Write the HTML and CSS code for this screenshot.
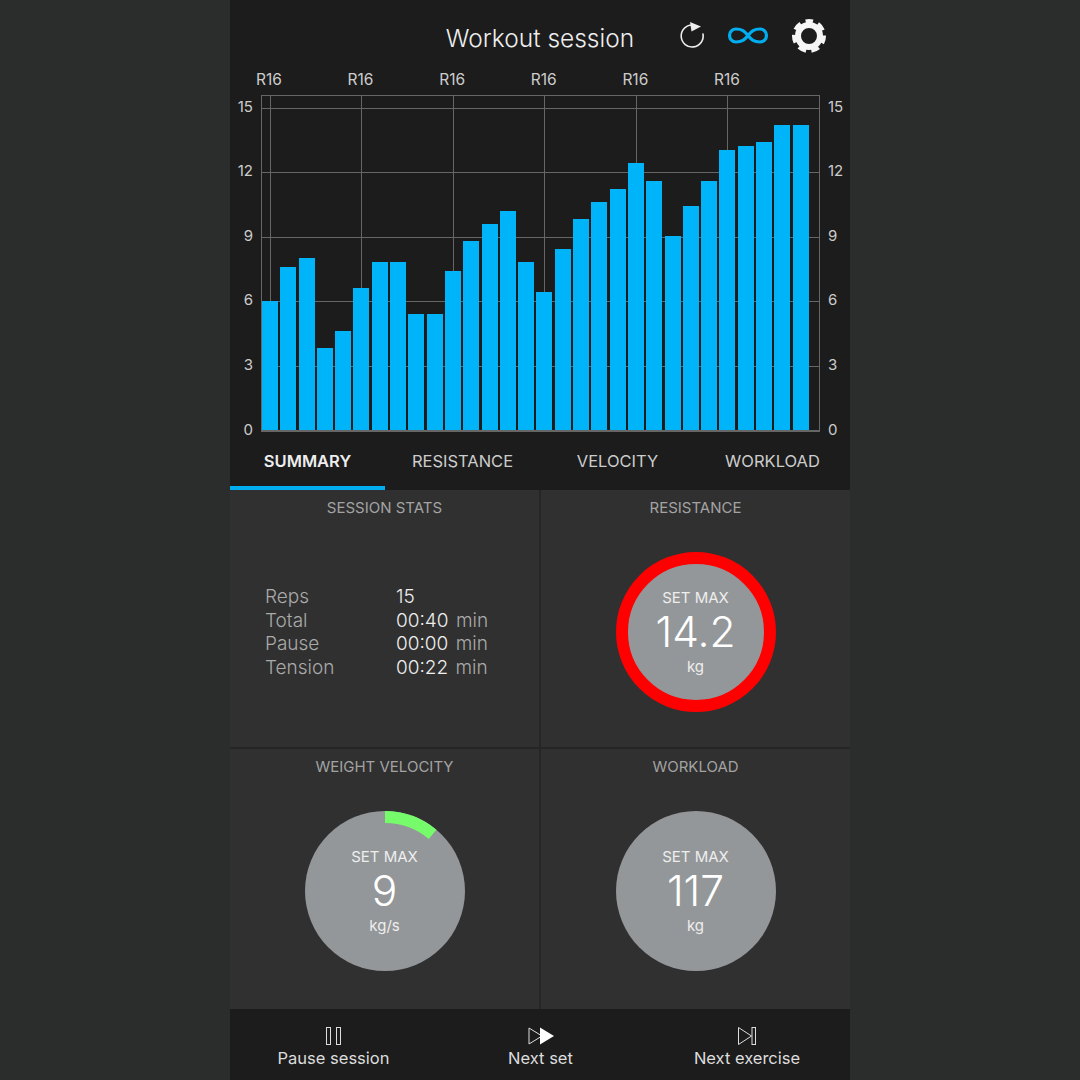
FILE: index.html
```html
<!DOCTYPE html>
<html lang="en">
<head>
  <meta charset="UTF-8">
  <meta name="viewport" content="width=device-width, initial-scale=1.0">
  <title>Workout session</title>
  <link rel="stylesheet" href="styles.css">
</head>
<body>
  <div class="phone">
    <header class="topbar">
      <h1 class="title">Workout session</h1>
      <div class="top-icons">
        <svg class="icon-refresh" width="26" height="28" viewBox="0 0 26 28" fill="none">
          <path d="M12 3A11 11 0 1 0 23 12" stroke="#eee" stroke-width="1.6" stroke-linecap="round"/>
          <path d="M10 0L21 4.500L11.500 9.500Z" fill="#eee"/>
        </svg>
        <svg class="icon-inf" width="42" height="20" viewBox="0 0 42 20" fill="none">
          <path d="M21 9.500C17.500 5 15 3 9 3A6.500 6.500 0 0 0 9 16C15 16 17.500 14 21 9.500C24.500 5 27 3 33 3A6.500 6.500 0 0 1 33 16C27 16 24.500 14 21 9.500Z" stroke="#00aeef" stroke-width="3.200"/>
        </svg>
        <svg class="icon-gear" width="34" height="34" viewBox="0 0 34 34" fill="none" stroke="#f5f5f5">
          <circle cx="17" cy="17" r="11" stroke-width="6"/>
          <circle cx="17" cy="17" r="15" stroke-width="4" stroke-dasharray="8 5.460" stroke-dashoffset="4" transform="rotate(-90 17 17)"/>
        </svg>
      </div>
    </header>

    <section class="chart">
      <div class="chart-top">
        <span>R16</span><span>R16</span><span>R16</span><span>R16</span><span>R16</span><span>R16</span>
      </div>
      <div class="chart-mid">
        <div class="axis axis-left">
          <span>15</span><span>12</span><span>9</span><span>6</span><span>3</span><span>0</span>
        </div>
        <div class="plot">
          <div class="vlines"><i></i><i></i><i></i><i></i><i></i><i></i></div>
          <div class="hlines"><i></i><i></i><i></i><i></i><i></i></div>
          <div class="bars">
            <b style="height:129px"></b><b style="height:163px"></b><b style="height:172px"></b><b style="height:82px"></b><b style="height:99px"></b>
            <b style="height:142px"></b><b style="height:168px"></b><b style="height:168px"></b><b style="height:116px"></b><b style="height:116px"></b>
            <b style="height:159px"></b><b style="height:189px"></b><b style="height:206px"></b><b style="height:219px"></b><b style="height:168px"></b>
            <b style="height:138px"></b><b style="height:181px"></b><b style="height:211px"></b><b style="height:228px"></b><b style="height:241px"></b>
            <b style="height:267px"></b><b style="height:249px"></b><b style="height:194px"></b><b style="height:224px"></b><b style="height:249px"></b>
            <b style="height:280px"></b><b style="height:284px"></b><b style="height:288px"></b><b style="height:305px"></b><b style="height:305px"></b>
          </div>
        </div>
        <div class="axis axis-right">
          <span>15</span><span>12</span><span>9</span><span>6</span><span>3</span><span>0</span>
        </div>
      </div>
    </section>

    <nav class="tabs">
      <div class="tab active">SUMMARY</div>
      <div class="tab">RESISTANCE</div>
      <div class="tab">VELOCITY</div>
      <div class="tab">WORKLOAD</div>
    </nav>

    <main class="panels">
      <section class="panel">
        <h2 class="panel-title">SESSION STATS</h2>
        <div class="stats">
          <span class="stat-name">Reps</span><span class="stat-val">15</span>
          <span class="stat-name">Total</span><span class="stat-val">00:40 <em>min</em></span>
          <span class="stat-name">Pause</span><span class="stat-val">00:00 <em>min</em></span>
          <span class="stat-name">Tension</span><span class="stat-val">00:22 <em>min</em></span>
        </div>
      </section>
      <section class="panel">
        <h2 class="panel-title">RESISTANCE</h2>
        <div class="gauge gauge-red">
          <span class="gauge-top">SET MAX</span>
          <span class="gauge-num">14.2</span>
          <span class="gauge-unit">kg</span>
        </div>
      </section>
      <section class="panel">
        <h2 class="panel-title">WEIGHT VELOCITY</h2>
        <div class="gauge">
          <svg class="gauge-arc" width="160" height="160" viewBox="0 0 160 160">
            <path d="M80 0A80 80 0 0 1 131.400 18.700L123.700 27.900A68 68 0 0 0 80 12Z" fill="#76fb6a"/>
          </svg>
          <span class="gauge-top">SET MAX</span>
          <span class="gauge-num">9</span>
          <span class="gauge-unit">kg/s</span>
        </div>
      </section>
      <section class="panel">
        <h2 class="panel-title">WORKLOAD</h2>
        <div class="gauge">
          <span class="gauge-top">SET MAX</span>
          <span class="gauge-num">117</span>
          <span class="gauge-unit">kg</span>
        </div>
      </section>
    </main>

    <footer class="bottombar">
      <div class="action">
        <svg width="18" height="20" viewBox="0 0 18 20" fill="none" stroke="#ddd" stroke-width="1">
          <rect x="1.500" y="1.500" width="4" height="17"/><rect x="11.500" y="1.500" width="4" height="17"/>
        </svg>
        <span>Pause session</span>
      </div>
      <div class="action">
        <svg width="28" height="20" viewBox="0 0 28 20">
          <path d="M2 2L15 10L2 18Z" fill="none" stroke="#ddd" stroke-width="1"/>
          <path d="M13 1.500L27 10L13 18.500Z" fill="#fff"/>
        </svg>
        <span>Next set</span>
      </div>
      <div class="action">
        <svg width="20" height="20" viewBox="0 0 20 20" fill="none" stroke="#ddd" stroke-width="1">
          <path d="M1.500 1.500L14.500 10L1.500 18.500Z"/><rect x="15" y="1.500" width="3.500" height="17"/>
        </svg>
        <span>Next exercise</span>
      </div>
    </footer>
  </div>
</body>
</html>
```

FILE: styles.css
```css
* {
  box-sizing: border-box;
}

body {
  margin: 0;
  height: 1080px;
  display: flex;
  justify-content: center;
  background: #2b2d2c;
  font-family: Inter, "Liberation Sans", sans-serif;
  overflow: hidden;
}

.phone {
  width: 620px;
  height: 1080px;
  display: flex;
  flex-direction: column;
  background: #1c1c1c;
  color: #ddd;
}

/* header */
.topbar {
  height: 70px;
  display: flex;
  position: relative;
  justify-content: center;
  align-items: center;
}

.title {
  margin: 6px 0 0;
  font-size: 24.500px;
  font-weight: 300;
  color: #eee;
}

.top-icons {
  position: absolute;
  right: 24px;
  top: 19px;
  display: flex;
  align-items: center;
  gap: 21px;
}

.icon-inf {
  margin-right: 2px;
}

/* chart */
.chart {
  height: 362px;
}

.chart-top {
  height: 25px;
  padding-left: 26px;
  display: flex;
  font-size: 15.500px;
  line-height: 20px;
  color: #ccc;
}

.chart-top span {
  width: 91.600px;
}

.chart-mid {
  display: flex;
}

.axis {
  flex: none;
  height: 337px;
  padding-top: 4px;
  font-size: 15px;
  line-height: 16px;
  color: #ccc;
}

.axis span {
  display: block;
  height: 64.600px;
}

.axis-left {
  width: 31px;
  padding-right: 8px;
  text-align: right;
}

.axis-right {
  width: 30px;
  padding-left: 8px;
}

.plot {
  flex: none;
  position: relative;
  width: 559px;
  height: 337px;
  border: 1px solid #666;
  border-bottom-width: 2px;
  display: flex;
  align-items: flex-end;
}

.vlines i {
  position: absolute;
  top: 0;
  bottom: 0;
  width: 1px;
  background: #666;
}

.vlines i:nth-child(1) { left: 8px; }
.vlines i:nth-child(2) { left: 99px; }
.vlines i:nth-child(3) { left: 191px; }
.vlines i:nth-child(4) { left: 282px; }
.vlines i:nth-child(5) { left: 374px; }
.vlines i:nth-child(6) { left: 465px; }

.hlines i {
  position: absolute;
  left: 0;
  right: 0;
  height: 1px;
  background: #666;
}

.hlines i:nth-child(1) { top: 12px; }
.hlines i:nth-child(2) { top: 76px; }
.hlines i:nth-child(3) { top: 141px; }
.hlines i:nth-child(4) { top: 205px; }
.hlines i:nth-child(5) { top: 270px; }

.bars {
  position: relative;
  display: flex;
  align-items: flex-end;
  gap: 2.300px;
}

.bars b {
  width: 16px;
  background: #00b4fa;
}

/* tabs */
.tabs {
  height: 59px;
  display: grid;
  grid-template-columns: 155px 155px 155px 155px;
  font-size: 16.500px;
  color: #ccc;
}

.tab {
  padding-top: 19px;
  text-align: center;
}

.tab.active {
  color: #eee;
  font-weight: 600;
  border-bottom: 4px solid #00aeef;
}

/* panels */
.panels {
  height: 519px;
  display: grid;
  grid-template-columns: 311px 309px;
  grid-template-rows: 259px 260px;
  background: #303030;
}

.panel {
  display: flex;
  flex-direction: column;
  align-items: center;
  border-right: 2px solid #262626;
  border-bottom: 2px solid #262626;
}

.panel:nth-child(even) {
  border-right: 0;
}

.panel:nth-child(n+3) {
  border-bottom: 0;
}

.panel-title {
  margin: 9px 0 0;
  font-size: 15px;
  font-weight: 400;
  line-height: 17px;
  color: #a3a3a3;
}

.stats {
  width: 100%;
  margin-top: 69px;
  padding-left: 35px;
  display: grid;
  grid-template-columns: 131px 1fr;
  font-size: 19px;
  font-weight: 300;
  line-height: 23.500px;
  color: #aaa;
}

.stat-val {
  color: #eee;
  word-spacing: 2px;
}

.stat-val em {
  font-style: normal;
  color: #aaa;
}

.gauge {
  position: relative;
  width: 160px;
  height: 160px;
  margin-top: 36px;
  display: flex;
  flex-direction: column;
  align-items: center;
  border-radius: 50%;
  background: #949799;
  color: #fff;
}

.gauge-red {
  border: 12px solid #fe0000;
}

.gauge-arc {
  position: absolute;
  top: 0;
  left: 0;
}

.gauge-top {
  margin-top: 37px;
  font-size: 15px;
  line-height: 18px;
  color: #eee;
}

.gauge-red .gauge-top {
  margin-top: 25px;
}

.gauge-num {
  font-size: 42.500px;
  font-weight: 300;
  line-height: 50px;
}

.gauge-unit {
  margin-top: 1px;
  font-size: 15px;
  line-height: 18px;
  color: #eee;
}

/* bottom */
.bottombar {
  height: 71px;
  display: grid;
  grid-template-columns: 207px 207px 206px;
  font-size: 16.500px;
  color: #ddd;
}

.action {
  padding-top: 17px;
  display: flex;
  flex-direction: column;
  align-items: center;
  gap: 2px;
}
```
